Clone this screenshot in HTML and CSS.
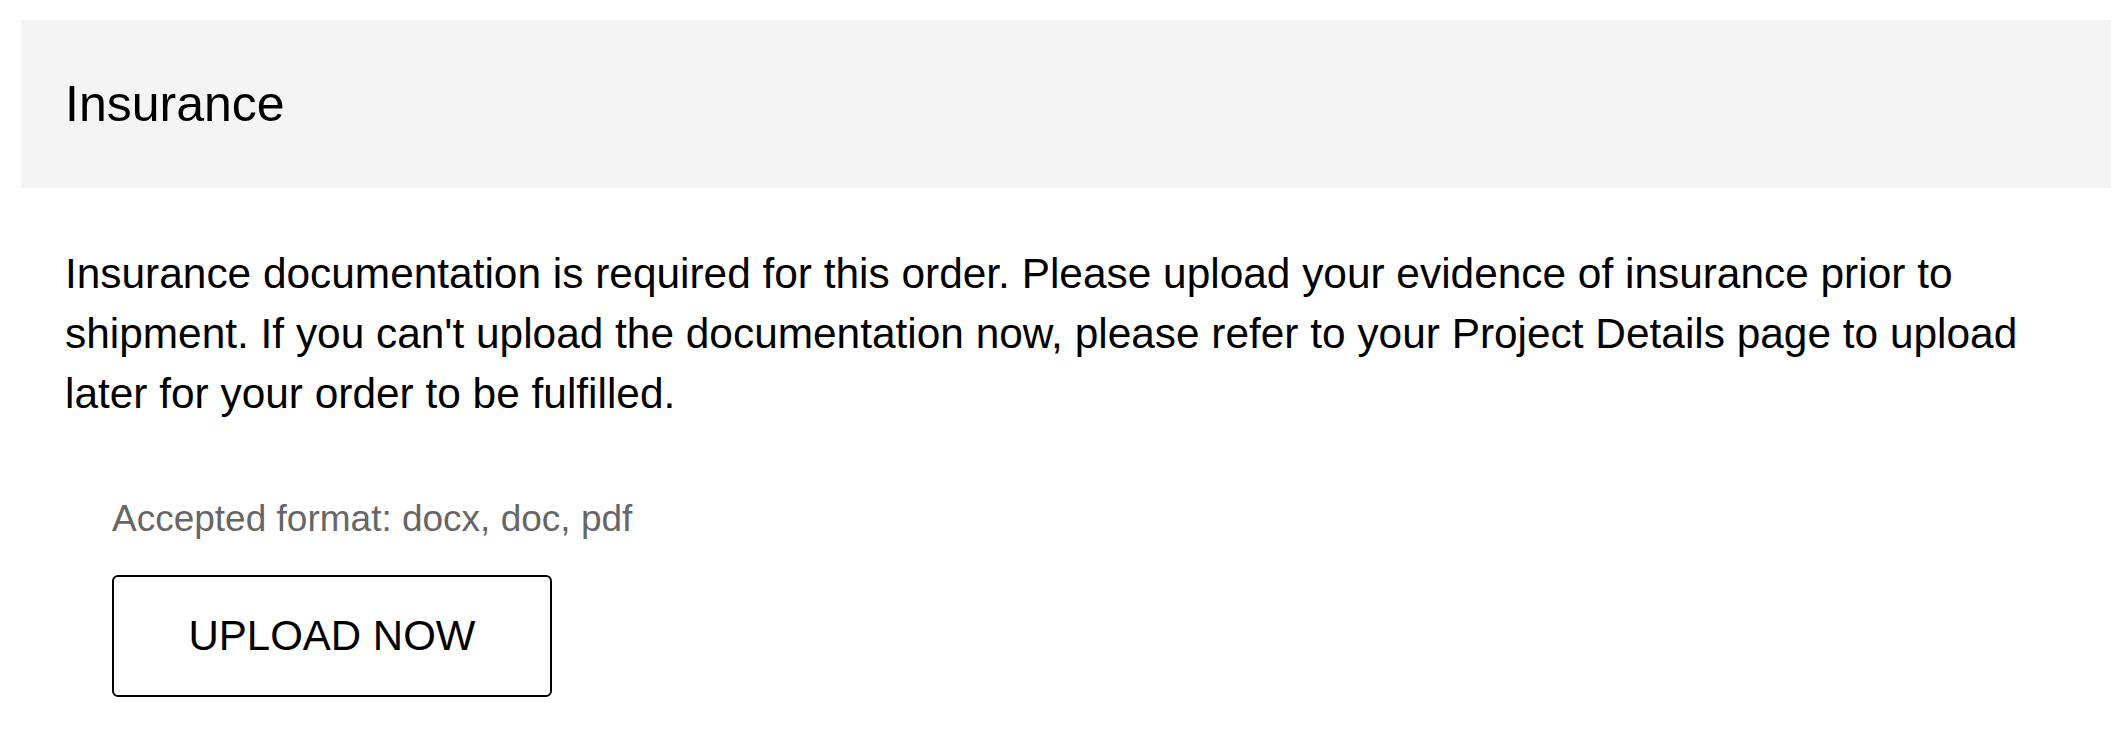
FILE: index.html
```html
<!DOCTYPE html>
<html lang="en">
<head>
  <meta charset="UTF-8" />
  <meta name="viewport" content="width=device-width, initial-scale=1.0" />
  <title>Insurance</title>
  <link rel="stylesheet" href="styles.css">
</head>
<body>
  <div class="panel">
    <div class="panel-header">
      <h2>Insurance</h2>
    </div>
    <div class="panel-body">
      <p class="notice">Insurance documentation is required for this order. Please upload your evidence of insurance prior to shipment. If you can't upload the documentation now, please refer to your Project Details page to upload later for your order to be fulfilled.</p>
      <div class="upload">
        <p class="formats">Accepted format: docx, doc, pdf</p>
        <button class="upload-btn">UPLOAD NOW</button>
      </div>
    </div>
  </div>
</body>
</html>
```

FILE: styles.css
```css
body {
  margin: 0;
  font-family: "Liberation Sans", Arial, sans-serif;
  background-color: #fff;
  color: #000;
}
.panel {
  padding: 20px 17px 0 21px;
}
.panel-header {
  background-color: #f4f4f4;
  height: 168px;
  padding: 0 44px;
  display: flex;
  align-items: center;
}
.panel-header h2 {
  margin: 0;
  font-size: 50px;
  font-weight: normal;
}
.panel-body {
  padding: 56px 47px 0 44px;
}
.notice {
  margin: 0;
  font-size: 42.4px;
  line-height: 60px;
}
.upload {
  padding: 73px 0 0 47px;
}
.formats {
  margin: 0;
  font-size: 37px;
  line-height: 44px;
  color: #666;
}
.upload-btn {
  display: block;
  margin-top: 34px;
  width: 440px;
  height: 122px;
  background: #fff;
  border: 2px solid #000;
  border-radius: 6px;
  font-family: "Liberation Sans", Arial, sans-serif;
  font-size: 42px;
  color: #000;
  cursor: pointer;
}
```
